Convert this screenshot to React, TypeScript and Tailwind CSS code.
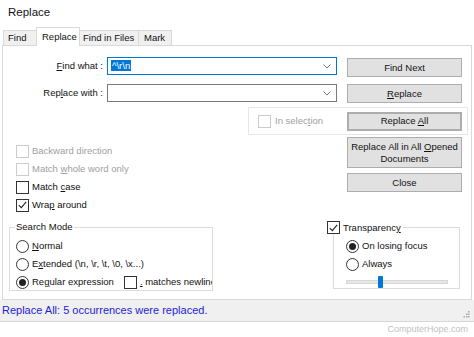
import React from "react";

function Check({ checked = false, disabled = false }: { checked?: boolean; disabled?: boolean }) {
  return (
    <span
      className={`flex size-[13px] shrink-0 items-center justify-center border bg-white ${
        disabled ? "border-[#cccccc]" : "border-[#333333]"
      }`}
    >
      {checked && (
        <svg width="9" height="8" viewBox="0 0 9 8">
          <path d="M0.8 4.2 L3.3 6.6 L8.2 0.8" fill="none" stroke="#222" strokeWidth="1.1" />
        </svg>
      )}
    </span>
  );
}

function Radio({ on = false }: { on?: boolean }) {
  return (
    <span className="flex size-[13px] shrink-0 items-center justify-center rounded-full border border-[#333333] bg-white">
      {on && <span className="size-[7px] rounded-full bg-[#222222]" />}
    </span>
  );
}

function Btn({ children, cls = "" }: { children: React.ReactNode; cls?: string }) {
  return (
    <div
      className={`flex w-[115px] items-center justify-center border border-[#adadad] bg-[#e1e1e1] text-center leading-[12px] ${cls}`}
    >
      {children}
    </div>
  );
}

function Combo({ children, focus = false }: { children?: React.ReactNode; focus?: boolean }) {
  return (
    <div
      className={`ml-[4px] flex h-[18px] w-[230px] items-center border bg-white pl-[3px] pr-[5px] ${
        focus ? "border-[#0078d7]" : "border-[#7a7a7a]"
      }`}
    >
      <div className="flex-1">{children}</div>
      <svg width="8" height="5" viewBox="0 0 8 5">
        <path d="M0.5 0.5 L4 4 L7.5 0.5" fill="none" stroke="#777" strokeWidth="1" />
      </svg>
    </div>
  );
}

export default function App() {
  return (
    <div className="relative h-[337px] w-[474px] overflow-hidden bg-white font-['Liberation_Sans',Arial,sans-serif] text-[9.5px] text-[#111]">
      {/* title */}
      <div className="flex h-[28px] items-center pb-[2px] pl-[8px] text-[11.5px]">Replace</div>

      {/* tabs */}
      <div className="flex h-[17px] items-end pl-[3px]">
        <div className="flex h-[15px] w-[33px] items-center border border-r-0 border-b-0 border-[#d9d9d9] bg-[#f0f0f0] pl-[4px]">Find</div>
        <div className="relative z-10 -mb-px flex h-[19px] w-[44px] items-start border border-b-0 border-[#d9d9d9] bg-white pl-[5px] pt-[2px]">Replace</div>
        <div className="flex h-[15px] w-[58px] items-center border-t border-[#d9d9d9] bg-[#f0f0f0] pl-[3px]">Find in Files</div>
        <div className="flex h-[15px] w-[34px] items-center border border-b-0 border-[#d9d9d9] bg-[#f0f0f0] pl-[5px]">Mark</div>
      </div>

      {/* panel */}
      <div className="ml-[2px] h-[255px] w-[470px] border border-[#d9d9d9] bg-white">
        <div className="mt-[11px] flex h-[20px] items-start">
          <div className="flex h-[18px] w-[100px] items-center justify-end">
            <span><u>F</u>ind what :</span>
          </div>
          <Combo focus>
            <span className="bg-[#0078d7] px-px text-white">^\r\n</span>
          </Combo>
          <Btn cls="ml-[10px] mt-[1px] h-[19px]">Find Next</Btn>
        </div>

        <div className="mt-[7px] flex h-[20px] items-start">
          <div className="flex h-[18px] w-[100px] items-center justify-end">
            <span>Rep<u>l</u>ace with :</span>
          </div>
          <Combo />
          <Btn cls="ml-[10px] h-[19px]">
            <span><u>R</u>eplace</span>
          </Btn>
        </div>

        <div className="ml-[245px] mt-[3px] flex h-[28px] w-[220px] items-center border border-[#e6e6e6]">
          <div className="flex w-[98px] items-center gap-[4px] pl-[9px] text-[#a0a0a0]">
            <Check disabled />
            <span>In selec<u>t</u>ion</span>
          </div>
          <Btn cls="h-[19px] border-2 border-[#0078d7]">
            <span>Replace <u>A</u>ll</span>
          </Btn>
        </div>

        <div className="flex">
          <div className="mt-[7px] flex w-[344px] flex-col pl-[13px]">
            <div className="flex h-[18px] items-center gap-[3px] text-[#a0a0a0]">
              <Check disabled />
              <span>Backward direction</span>
            </div>
            <div className="flex h-[18px] items-center gap-[3px] text-[#a0a0a0]">
              <Check disabled />
              <span>Match <u>w</u>hole word only</span>
            </div>
            <div className="flex h-[18px] items-center gap-[3px]">
              <Check />
              <span>Match <u>c</u>ase</span>
            </div>
            <div className="flex h-[18px] items-center gap-[3px]">
              <Check checked />
              <span>Wra<u>p</u> around</span>
            </div>
          </div>
          <div className="flex flex-col">
            <Btn cls="mt-[2px] h-[31px]">
              <span>Replace All in All <u>O</u>pened<br />Documents</span>
            </Btn>
            <Btn cls="mt-[5px] h-[19px]">Close</Btn>
          </div>
        </div>

        <div className="mt-[13px] flex items-start">
          <div className="relative ml-[6px] h-[64px] w-[204px] border border-[#dcdcdc]">
            <span className="absolute -top-[7px] left-[5px] bg-white px-[1px] leading-[12px]">Search Mode</span>
            <div className="h-full overflow-hidden pl-[6px] pt-[9px]">
              <div className="flex h-[18px] items-center gap-[3px]">
                <Radio />
                <span><u>N</u>ormal</span>
              </div>
              <div className="flex h-[18px] items-center gap-[3px]">
                <Radio />
                <span>E<u>x</u>tended (\n, \r, \t, \0, \x...)</span>
              </div>
              <div className="flex h-[18px] items-center gap-[3px] whitespace-nowrap">
                <Radio on />
                <span>Re<u>g</u>ular expression</span>
                <span className="ml-[7px]"><Check /></span>
                <span><u>.</u> matches newline</span>
              </div>
            </div>
          </div>

          <div className="relative ml-[120px] h-[62px] w-[127px] border border-[#dcdcdc]">
            <div className="absolute -top-[7px] -left-[7px] flex items-center gap-[3px] bg-white pr-[2px] leading-[12px]">
              <Check checked />
              <span>Transparenc<u>y</u></span>
            </div>
            <div className="pl-[12px] pt-[9px]">
              <div className="flex h-[18px] items-center gap-[3px]">
                <Radio on />
                <span>On losing focus</span>
              </div>
              <div className="flex h-[18px] items-center gap-[3px]">
                <Radio />
                <span>Always</span>
              </div>
              <div className="relative mt-[3px] flex h-[12px] w-[102px] items-center">
                <div className="h-[4px] w-full border border-[#d6d6d6] bg-[#e7e7e7]" />
                <div className="absolute left-[32px] top-0 h-[12px] w-[5px] rounded-[1px] bg-[#0078d7]" />
              </div>
            </div>
          </div>
        </div>
      </div>

      {/* status bar */}
      <div className="flex h-[22px] items-center justify-between border-b border-[#d6d6d6] bg-[#f0f0f0] pl-[2px] pr-[4px]">
        <span className="text-[11px] text-[#2323d8]">Replace All: 5 occurrences were replaced.</span>
        <svg width="7" height="7" viewBox="0 0 7 7" className="mt-[8px]">
          <rect x="5" y="0" width="1.5" height="1.5" fill="#a8a8a8" />
          <rect x="3" y="2.5" width="1.5" height="1.5" fill="#a8a8a8" />
          <rect x="5" y="2.5" width="1.5" height="1.5" fill="#a8a8a8" />
          <rect x="0.5" y="5" width="1.5" height="1.5" fill="#a8a8a8" />
          <rect x="3" y="5" width="1.5" height="1.5" fill="#a8a8a8" />
          <rect x="5" y="5" width="1.5" height="1.5" fill="#a8a8a8" />
        </svg>
      </div>

      <div className="flex h-[15px] items-center justify-end pr-[6px] text-[9px] text-[#c2c2c2]">ComputerHope.com</div>
    </div>
  );
}
